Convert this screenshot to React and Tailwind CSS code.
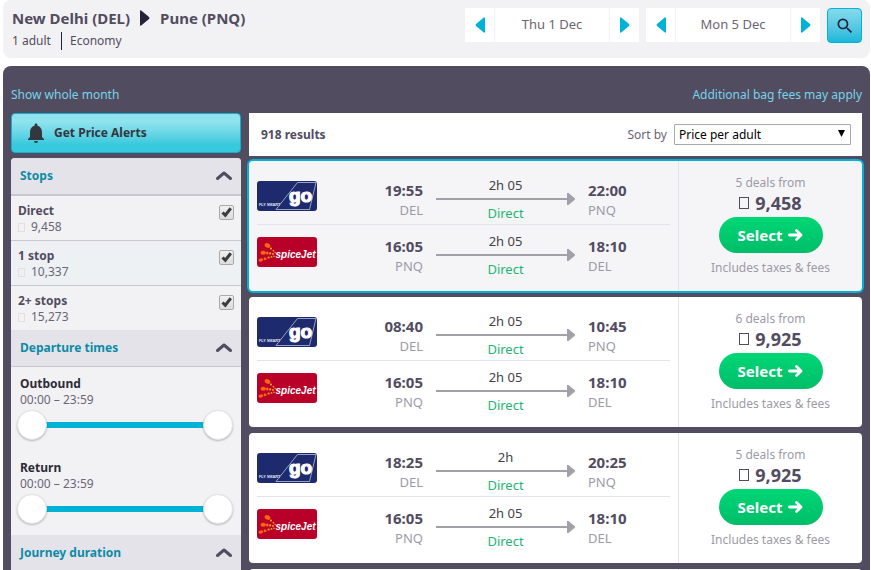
import React, { useState } from 'react';
import { MdNotifications, MdSearch } from 'react-icons/md';

const stops = [
  { id: 'direct', label: 'Direct', price: '9,458', bg: 'bg-[#f2f2f4]' },
  { id: 'one', label: '1 stop', price: '10,337', bg: 'bg-[#edf1f4]' },
  { id: 'two', label: '2+ stops', price: '15,273', bg: 'bg-[#f2f2f4]' },
];

const goLeg = (depart, arrive, duration) => ({ airline: 'go', from: 'DEL', to: 'PNQ', depart, arrive, duration });
const returnLeg = { airline: 'spicejet', from: 'PNQ', to: 'DEL', depart: '16:05', arrive: '18:10', duration: '2h 05' };

const flights = [
  { id: 1, deals: 5, price: '9,458', selected: true, legs: [goLeg('19:55', '22:00', '2h 05'), returnLeg] },
  { id: 2, deals: 6, price: '9,925', legs: [goLeg('08:40', '10:45', '2h 05'), returnLeg] },
  { id: 3, deals: 5, price: '9,925', legs: [goLeg('18:25', '20:25', '2h'), returnLeg] },
];

function GoLogo() {
  return (
    <svg className="block w-[60px] h-[30px] rounded-[3px] shrink-0" viewBox="0 0 60 30" role="img" aria-label="GoAir">
      <rect width="60" height="30" fill="#1e2a6e" />
      <path d="M19 28.500 L40.500 1.500 H59 L52.500 28.500 Z" fill="none" stroke="#b9bfdc" strokeWidth="0.8" />
      <text x="2" y="24.500" fontFamily="Liberation Sans" fontWeight="700" fontSize="3.800" fill="#e4e6f2">FLY SMART</text>
      <text x="32" y="21" fontFamily="Liberation Sans" fontWeight="700" fontSize="19" fill="#fff" stroke="#fff" strokeWidth="1.200">go</text>
    </svg>
  );
}

function SpiceJetLogo() {
  return (
    <svg className="block w-[60px] h-[30px] rounded-[3px] shrink-0" viewBox="0 0 60 30" role="img" aria-label="SpiceJet">
      <rect width="60" height="30" fill="#b90028" />
      <g fill="#f9660c">
        <ellipse cx="10.500" cy="8.500" rx="3" ry="2.200" transform="rotate(25 10.500 8.500)" />
        <ellipse cx="6.200" cy="15.800" rx="2.700" ry="2" />
        <ellipse cx="3.800" cy="23" rx="2.300" ry="1.700" transform="rotate(-20 3.800 23)" />
        <circle cx="10.200" cy="15.900" r="1.500" />
        <circle cx="8" cy="21.700" r="1.500" />
      </g>
      <g fill="#fba51a">
        <circle cx="14" cy="11.500" r="1.100" />
        <circle cx="16.500" cy="13.800" r="0.900" />
        <circle cx="18.300" cy="15.800" r="0.800" />
        <circle cx="13.200" cy="16.400" r="1.100" />
        <circle cx="16" cy="17" r="0.900" />
        <circle cx="11.600" cy="20.600" r="1.100" />
        <circle cx="14.500" cy="19.900" r="0.900" />
        <circle cx="17" cy="19.300" r="0.800" />
      </g>
      <text x="18.500" y="20.500" fontFamily="Liberation Sans" fontWeight="700" fontStyle="italic" fontSize="10" fill="#fff">spiceJet</text>
    </svg>
  );
}

function Triangle({ left }) {
  return (
    <svg className="w-[10px] h-4" viewBox="0 0 10 16" fill="currentColor" aria-hidden="true">
      {left ? (
        <path d="M10 1.200V14.800Q10 16 8.800 15.500L1 9Q0 8 1 7L8.800 0.500Q10 0 10 1.200Z" />
      ) : (
        <path d="M0 1.200V14.800Q0 16 1.200 15.500L9 9Q10 8 9 7L1.200 0.500Q0 0 0 1.200Z" />
      )}
    </svg>
  );
}

function DatePicker({ date }) {
  return (
    <div className="flex h-[34px] gap-px">
      <button aria-label="Previous day" className="w-[29px] bg-white text-[#00b2d6] flex items-center justify-center">
        <Triangle left />
      </button>
      <button className="w-[114px] bg-white text-[13px] text-[#6b6573]">{date}</button>
      <button aria-label="Next day" className="w-[29px] bg-white text-[#00b2d6] flex items-center justify-center">
        <Triangle />
      </button>
    </div>
  );
}

function SectionHeader({ title }) {
  return (
    <button className="w-full h-[37px] pl-[9px] pr-2 flex items-center justify-between bg-[#e4e3e9] border-b border-[#c8c6d2]">
      <span className="font-bold text-[#0d8ba6]">{title}</span>
      <svg className="w-[18px] h-3" viewBox="0 0 18 12" fill="none" stroke="#524c61" strokeWidth="3" strokeLinecap="round" strokeLinejoin="round" aria-hidden="true">
        <path d="M2.500 8.500L9 3L15.500 8.500" />
      </svg>
    </button>
  );
}

function StopRow({ stop }) {
  const [checked, setChecked] = useState(true);

  return (
    <label className={`flex justify-between h-[45px] pt-1.5 px-[7px] border-b border-[#c8c6d2] last:border-b-0 last:h-11 ${stop.bg}`}>
      <span>
        <span className="block leading-[17px] font-bold text-[#524c61]">{stop.label}</span>
        <span className="flex items-center leading-4 text-[#6b6578]">
          <span className="w-[7px] h-[9px] border border-[#e6dfe0] mr-1.5" />
          {stop.price}
        </span>
      </span>
      <span className="relative w-[15px] h-[15px] mt-[3px]">
        <input
          type="checkbox"
          checked={checked}
          onChange={e => setChecked(e.target.checked)}
          className="peer block appearance-none w-full h-full rounded-[2px] border border-[#a9a9a9] bg-gradient-to-b from-[#f0f0f0] to-[#dcdcdc]"
        />
        <svg className="absolute inset-0 hidden peer-checked:block pointer-events-none" viewBox="0 0 15 15" fill="none" stroke="#3c3c3c" strokeWidth="3" aria-hidden="true">
          <path d="M3.500 7.500L6.300 10.200L11.800 3.200" />
        </svg>
      </span>
    </label>
  );
}

const thumb = 'absolute inset-0 w-full h-[30px] appearance-none bg-transparent pointer-events-none [&::-webkit-slider-thumb]:appearance-none [&::-webkit-slider-thumb]:pointer-events-auto [&::-webkit-slider-thumb]:w-[30px] [&::-webkit-slider-thumb]:h-[30px] [&::-webkit-slider-thumb]:rounded-full [&::-webkit-slider-thumb]:bg-white [&::-webkit-slider-thumb]:border [&::-webkit-slider-thumb]:border-[#e4e3e9] [&::-webkit-slider-thumb]:shadow-[0_1px_2px_rgba(0,0,0,0.25)]';

function TimeRange({ label }) {
  const [from, setFrom] = useState(0);
  const [to, setTo] = useState(1439);
  const format = (m) => `${String(Math.floor(m / 60)).padStart(2, '0')}:${String(m % 60).padStart(2, '0')}`;

  return (
    <div className="h-[84px] pt-2 pl-1.5 pr-2">
      <div className="pl-[3px]">
        <div className="leading-[17px] font-bold text-[#2d2b36]">{label}</div>
        <div className="leading-4 text-[#6b6578]">{format(from)} – {format(to)}</div>
      </div>
      <div className="relative h-[30px] mt-0.5 flex items-center">
        <div className="h-1.5 mx-4 flex-1 bg-[#00b2d6]" />
        <input type="range" aria-label={`${label} earliest`} min="0" max="1439" value={from} onChange={e => setFrom(Math.min(Number(e.target.value), to))} className={thumb} />
        <input type="range" aria-label={`${label} latest`} min="0" max="1439" value={to} onChange={e => setTo(Math.max(Number(e.target.value), from))} className={thumb} />
      </div>
    </div>
  );
}

function Leg({ leg }) {
  return (
    <div className="flex items-center h-14 pt-1 border-b border-[#e4e3e9] last:border-b-0">
      <div className="mb-1.5">{leg.airline === 'go' ? <GoLogo /> : <SpiceJetLogo />}</div>
      <div className="flex-1 pt-0.5 text-right">
        <div className="text-[15px] leading-5 font-bold text-[#524c61]">{leg.depart}</div>
        <div className="leading-5 text-[#9d9aa6]">{leg.from}</div>
      </div>
      <div className="w-[139px] mx-[13px] text-center leading-5">
        <div className="text-[#444049]">{leg.duration}</div>
        <div className="flex items-center h-2">
          <div className="flex-1 h-0.5 bg-[#a1a1a9]" />
          <svg className="w-2 h-3" viewBox="0 0 8 12" fill="#a1a1a9" aria-hidden="true">
            <path d="M0 0H1.500L8 5.500V6.500L1.500 12H0Z" />
          </svg>
        </div>
        <div className="text-[#1db56c]">Direct</div>
      </div>
      <div className="w-[82px] pt-0.5">
        <div className="text-[15px] leading-5 font-bold text-[#524c61]">{leg.arrive}</div>
        <div className="leading-5 text-[#9d9aa6]">{leg.to}</div>
      </div>
    </div>
  );
}

function FlightCard({ flight }) {
  return (
    <article className={`flex h-[130px] rounded ${flight.selected ? 'bg-[#f5f5f8] ring-2 ring-[#00b2d6]' : 'bg-white'}`}>
      <div className="flex-1 px-2 pt-2 text-[13px]">
        {flight.legs.map(leg => <Leg key={leg.from} leg={leg} />)}
      </div>
      <div className="w-[184px] border-l border-[#e4e3e9] pt-3 flex flex-col items-center text-[#9d9aa6]">
        <span className="leading-5">{flight.deals} deals from</span>
        <span className="flex items-center text-lg leading-5 font-bold text-[#524c61]">
          <span className="w-2.5 h-3 border border-[#524c61] mr-1.5" />
          {flight.price}
        </span>
        <button className="w-[104px] h-9 mt-1 rounded-full bg-gradient-to-b from-[#00d775] to-[#00bd68] text-white text-[15px] font-bold flex items-center justify-center gap-1.5">
          Select
          <svg className="w-[15px] h-3" viewBox="0 0 15 12" fill="none" stroke="currentColor" strokeWidth="2.800" strokeLinecap="round" strokeLinejoin="round" aria-hidden="true">
            <path d="M1.500 6H12.500M8.500 1.500L13 6L8.500 10.500" />
          </svg>
        </button>
        <span className="mt-[5px] leading-5">Includes taxes &amp; fees</span>
      </div>
    </article>
  );
}

export default function App() {
  const [sort, setSort] = useState('price');

  return (
    <div className="h-screen overflow-hidden flex flex-col pl-[3px] pr-px bg-white text-xs font-['Noto_Sans',sans-serif]">
      {/* Search summary */}
      <header className="h-[58px] shrink-0 pl-[9px] pr-2 pt-2 flex justify-between rounded-lg bg-[#f2f2f4] text-[#524c61]">
        <div>
          <h1 className="flex items-center gap-2.5 text-[15px] leading-5 font-bold">
            New Delhi (DEL)
            <span className="text-[#26223a]"><Triangle /></span>
            Pune (PNQ)
          </h1>
          <div className="flex mt-1 leading-[18px]">
            <span className="pr-2.5 border-r border-[#26223a]">1 adult</span>
            <span className="pl-2">Economy</span>
          </div>
        </div>
        <div className="flex gap-[7px]">
          <DatePicker date="Thu 1 Dec" />
          <DatePicker date="Mon 5 Dec" />
          <button aria-label="Search" className="w-[35px] h-[35px] rounded border border-[#00b2d6] bg-gradient-to-b from-[#84dbec] to-[#14b8da] text-[#26223a] flex items-center justify-center">
            <MdSearch className="w-5 h-5" />
          </button>
        </div>
      </header>

      <main className="flex-1 mt-2 px-2 pt-5 rounded-t-lg bg-[#524c61]">
        <div className="flex justify-between h-[27px] leading-[18px] text-[#76d3e8]">
          <a href="#month">Show whole month</a>
          <a href="#bags">Additional bag fees may apply</a>
        </div>

        <div className="flex gap-2">
          {/* Filters */}
          <aside className="w-[230px] shrink-0">
            <button className="w-full h-10 mb-[5px] pl-3 flex items-center gap-1.5 rounded border border-[#14afcf] bg-gradient-to-b from-[#8fe3ee] from-20% to-[#37c9dd] to-80% font-bold text-[#333740]">
              <MdNotifications className="w-6 h-6" />
              Get Price Alerts
            </button>
            <div className="rounded-t bg-[#f2f2f4] overflow-hidden">
              <SectionHeader title="Stops" />
              <div className="border-t border-[#c8c6d2]">
                {stops.map(stop => <StopRow key={stop.id} stop={stop} />)}
              </div>
              <SectionHeader title="Departure times" />
              <TimeRange label="Outbound" />
              <TimeRange label="Return" />
              <SectionHeader title="Journey duration" />
            </div>
          </aside>

          {/* Results */}
          <section className="flex-1">
            <div className="h-[43px] mb-[5px] pl-3 pr-[11px] flex items-center justify-between bg-white">
              <h2 className="font-bold text-[#524c61]">918 results</h2>
              <div className="flex items-center gap-[7px]">
                <label htmlFor="sort" className="text-[#6b6573]">Sort by</label>
                <div className="relative">
                  <select
                    id="sort"
                    value={sort}
                    onChange={e => setSort(e.target.value)}
                    className="block appearance-none w-[177px] h-[21px] px-1 border border-[#a9a9a9] rounded-[1px] bg-white text-black"
                  >
                    <option value="price">Price per adult</option>
                    <option value="duration">Duration</option>
                  </select>
                  <svg className="absolute right-1.5 top-1.5 w-[7px] h-[7px] pointer-events-none" viewBox="0 0 7 7" aria-hidden="true">
                    <path d="M0 0H7L3.500 7Z" />
                  </svg>
                </div>
              </div>
            </div>
            <div className="flex flex-col gap-1.5">
              {flights.map(flight => <FlightCard key={flight.id} flight={flight} />)}
              {/* next result, still loading */}
              <div className="flex h-[130px] rounded bg-white">
                <div className="ml-auto w-[184px] border-l border-[#e4e3e9]" />
              </div>
            </div>
          </section>
        </div>
      </main>
    </div>
  );
}
